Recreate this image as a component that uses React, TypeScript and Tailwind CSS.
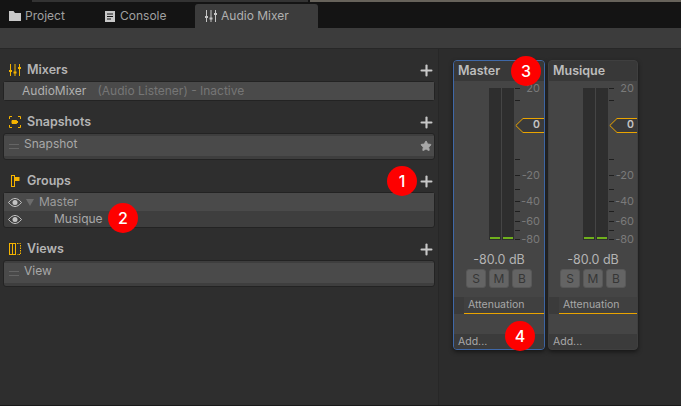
import { Plus, Star } from "lucide-react";

const font = { fontFamily: "Inter, 'Liberation Sans', sans-serif" };

function SlidersIcon({ color = "#c4c4c4" }: { color?: string }) {
  return (
    <svg width="12" height="12" viewBox="0 0 12 12" fill="none" stroke={color} strokeWidth="1">
      <path d="M1.500 0v12M6 0v12M10.500 0v12" />
      <path d="M0 7h3M4.500 8.500h3M9 4h3" strokeWidth="2" />
    </svg>
  );
}

function SnapshotIcon() {
  return (
    <svg width="12" height="12" viewBox="0 0 12 12" fill="none" stroke="#f5b400" strokeWidth="1">
      <path d="M.5 3V.5H3M9 .5h2.500V3M11.500 9v2.500H9M3 11.500H.5V9" />
      <path d="M3 4.500h4.500l1.500 1.500-1.500 1.500H3z" fill="#f5b400" />
    </svg>
  );
}

function GroupsIcon() {
  return (
    <svg width="12" height="12" viewBox="0 0 12 12" fill="none" stroke="#f5b400" strokeWidth="1">
      <rect x="2.500" y=".5" width="3" height="11" />
      <rect x="6" y="2.500" width="4" height="3" fill="#f5b400" />
    </svg>
  );
}

function ViewsIcon() {
  return (
    <svg width="12" height="12" viewBox="0 0 12 12" fill="none" stroke="#f5b400" strokeWidth="1">
      <rect x=".5" y=".5" width="6" height="11" />
      <path d="M3.500 .5v11" />
      <path d="M8 .5h3.500v11H8" strokeDasharray="1.500 1" />
    </svg>
  );
}

function Eye() {
  return (
    <svg width="14" height="9" viewBox="0 0 14 9" fill="none">
      <path d="M.5 4.500C3 1.500 5 .5 7 .5s4 1 6.500 4C11 7.500 9 8.500 7 8.500s-4-1-6.500-4z" stroke="#c4c4c4" />
      <circle cx="7" cy="4.500" r="2.500" fill="#c4c4c4" />
    </svg>
  );
}

function Handle() {
  return (
    <div className="flex w-[10px] flex-col gap-[3px]">
      <div className="h-px bg-[#656565]" />
      <div className="h-px bg-[#656565]" />
    </div>
  );
}

function Badge({ n, className }: { n: number; className: string }) {
  return (
    <div
      className={`absolute flex h-[30px] w-[30px] items-center justify-center rounded-full bg-[#fe0000] text-[16px] font-medium text-white ${className}`}
    >
      {n}
    </div>
  );
}

function Section({
  icon,
  title,
  boxClass,
  children,
}: {
  icon: React.ReactNode;
  title: string;
  boxClass: string;
  children: React.ReactNode;
}) {
  return (
    <section>
      <div className="flex h-[22px] items-center pl-[9px] pr-[3px]">
        <span className="flex w-[18px]">{icon}</span>
        <span className="text-[12.500px] font-semibold text-[#b4b4b4]">{title}</span>
        <Plus className="ml-auto text-[#c8c8c8]" size={17} strokeWidth={3} />
      </div>
      <div className={`mx-[3px] rounded-[3px] border border-[#232323] bg-[#3e3e3e] ${boxClass}`}>{children}</div>
    </section>
  );
}

// tick rows of the level meter, offset from the top of the meter block
const scale: { top: number; label?: string }[] = [
  { top: 7, label: "20" },
  { top: 19 },
  { top: 78 },
  { top: 94, label: "-20" },
  { top: 108 },
  { top: 120, label: "-40" },
  { top: 130 },
  { top: 140, label: "-60" },
  { top: 149 },
  { top: 158, label: "-80" },
];

function Strip({ name, selected }: { name: string; selected?: boolean }) {
  return (
    <div
      className={`flex h-[290px] flex-col overflow-hidden rounded-[4px] border bg-[#454545] shadow-[0_2px_4px_rgba(0,0,0,0.5)] ${
        selected ? "w-[92px] border-[#3f68a8]" : "w-[90px] border-[#3f3f3f]"
      }`}
    >
      <div className="flex h-[20px] shrink-0 items-center bg-[#383838] px-[4px] text-[12.500px] font-semibold text-[#bdbdbd]">
        {name}
      </div>
      <div className={`relative h-[160px] shrink-0 ${selected ? "ml-px" : ""}`}>
        <div className="absolute left-[34px] top-[7px] flex h-[152px] gap-px">
          {[0, 1].map((i) => (
            <div key={i} className="flex w-[12px] flex-col justify-end bg-[#2e2e2e] px-px pb-px">
              <div className="h-[2px] bg-[#6fb01c]" />
            </div>
          ))}
        </div>
        {scale.map(({ top, label }) => (
          <div key={top} className="absolute left-[60px] h-px w-[5px] bg-[#1f1f1f]" style={{ top }}>
            {label && (
              <span className="absolute right-[-20px] top-[-5px] text-[11px] leading-[11px] whitespace-nowrap text-[#7a7a7a]">
                {label}
              </span>
            )}
          </div>
        ))}
        <svg className="absolute left-[60px] top-[37px]" width="29" height="15" viewBox="0 0 29 15" fill="none">
          <path d="M29 .5H8L.8 7.500 8 14.500h21" fill="#3a3a3a" stroke="#eaa400" />
        </svg>
        <span className="absolute left-[78px] top-[38px] text-[10.500px] font-semibold leading-[12px] text-[#c4c4c4]">0</span>
      </div>
      <div className="mt-[12px] text-center text-[12.500px] leading-[14px] text-[#b4b4b4]">-80.0 dB</div>
      <div className="mt-[2px] flex justify-center gap-[3px]">
        {["S", "M", "B"].map((b) => (
          <div
            key={b}
            className="flex h-[19px] w-[20px] items-center justify-center rounded-[3px] border border-[#585858] bg-[#646464] text-[12px] text-[#363636]"
          >
            {b}
          </div>
        ))}
      </div>
      <div className="mt-[9px] flex h-[17px] shrink-0 bg-[#3b3b3b] pl-[10px]">
        <div className="flex-1 border-b border-[#eaa400] bg-[#404040] pl-[4px] text-[10.500px] leading-[16px] text-[#a8a8a8]">
          Attenuation
        </div>
      </div>
      <div className="flex-1" />
      <div className="flex h-[15px] shrink-0 items-center bg-[#3b3b3b] px-[4px] text-[10.500px] text-[#a8a8a8]">Add...</div>
    </div>
  );
}

export default function App() {
  return (
    <div className="relative flex h-[406px] w-[681px] flex-col overflow-hidden bg-[#2c2c2c]" style={font}>
      <div className="flex h-[2px] bg-[#141414]">
        <div className="ml-[32px] w-[276px] bg-[#333333]" />
        <div className="ml-[2px] flex-1 bg-[#67635b]" />
      </div>
      <div className="h-[2px] bg-[#141414]" />
      <div className="flex h-[24px] items-center bg-[#141414] text-[12px] text-[#a0a0a0]">
        <div className="flex w-[92px] items-center pl-[9px]">
          <svg width="12" height="10" viewBox="0 0 12 10" fill="#c8c8c8">
            <path d="M0 0h4.500l1.500 2h6v8H0z" />
          </svg>
          <span className="ml-[4px]">Project</span>
        </div>
        <div className="flex w-[103px] items-center pl-[13px]">
          <svg width="10" height="11" viewBox="0 0 10 11">
            <rect width="10" height="11" fill="#c8c8c8" />
            <path d="M2 3h6M2 5.500h6M2 8h4" stroke="#141414" />
          </svg>
          <span className="ml-[5px]">Console</span>
        </div>
        <div className="flex h-full w-[123px] items-center rounded-t-[3px] bg-[#3c3c3c] pl-[10px] text-[#b0b0b0]">
          <SlidersIcon />
          <span className="ml-[4px]">Audio Mixer</span>
        </div>
      </div>
      <div className="h-[21px] border-b border-[#272727] bg-[#3c3c3c]" />
      <div className="flex flex-1">
        <div className="flex w-[439px] flex-col gap-[10px] border-r border-[#272727] bg-[#2e2e2e] pt-[10px]">
          <Section icon={<SlidersIcon color="#f5b400" />} title="Mixers" boxClass="h-[20px]">
            <div className="h-full bg-[#4a4a4a] pl-[18px] text-[12px] leading-[18px] text-[#b0b0b0]">
              AudioMixer
              <span className="ml-[11px] text-[#767676]">(Audio Listener) - Inactive</span>
            </div>
          </Section>
          <Section icon={<SnapshotIcon />} title="Snapshots" boxClass="h-[27px]">
            <div className="mt-[2px] flex h-[20px] items-center gap-[5px] bg-[#4a4a4a] pl-[5px] pr-[2px] text-[12px] text-[#a8a8a8]">
              <Handle />
              <span className="pb-[4px]">Snapshot</span>
              <Star className="ml-auto text-[#a8a8a8]" fill="#a8a8a8" size={12} />
            </div>
          </Section>
          <Section icon={<GroupsIcon />} title="Groups" boxClass="h-[36px]">
            <div className="flex h-[18px] items-center bg-[#4a4a4a] pl-[4px] text-[12px] text-[#9c9c9c]">
              <Eye />
              <span className="ml-[4px] h-0 w-0 border-x-[4.500px] border-t-[7px] border-x-transparent border-t-[#6c6c6c]" />
              <span className="ml-[5px]">Master</span>
            </div>
            <div className="flex h-[16px] items-center pl-[4px] text-[12px] text-[#a8a8a8]">
              <Eye />
              <span className="ml-[32px]">Musique</span>
            </div>
          </Section>
          <Section icon={<ViewsIcon />} title="Views" boxClass="h-[27px]">
            <div className="mt-[2px] flex h-[20px] items-center gap-[5px] bg-[#4a4a4a] pl-[5px] text-[12px] text-[#a8a8a8]">
              <Handle />
              <span className="pb-[4px]">View</span>
            </div>
          </Section>
        </div>
        <div className="flex flex-1 items-start gap-[3px] bg-[#2c2c2c] pl-[14px] pt-[11px]">
          <Strip name="Master" selected />
          <Strip name="Musique" />
        </div>
      </div>
      <div className="h-px bg-[#191919]" />
      <Badge n={1} className="left-[387px] top-[166px]" />
      <Badge n={2} className="left-[108px] top-[203px]" />
      <Badge n={3} className="left-[511px] top-[56px]" />
      <Badge n={4} className="left-[505px] top-[321px]" />
    </div>
  );
}
